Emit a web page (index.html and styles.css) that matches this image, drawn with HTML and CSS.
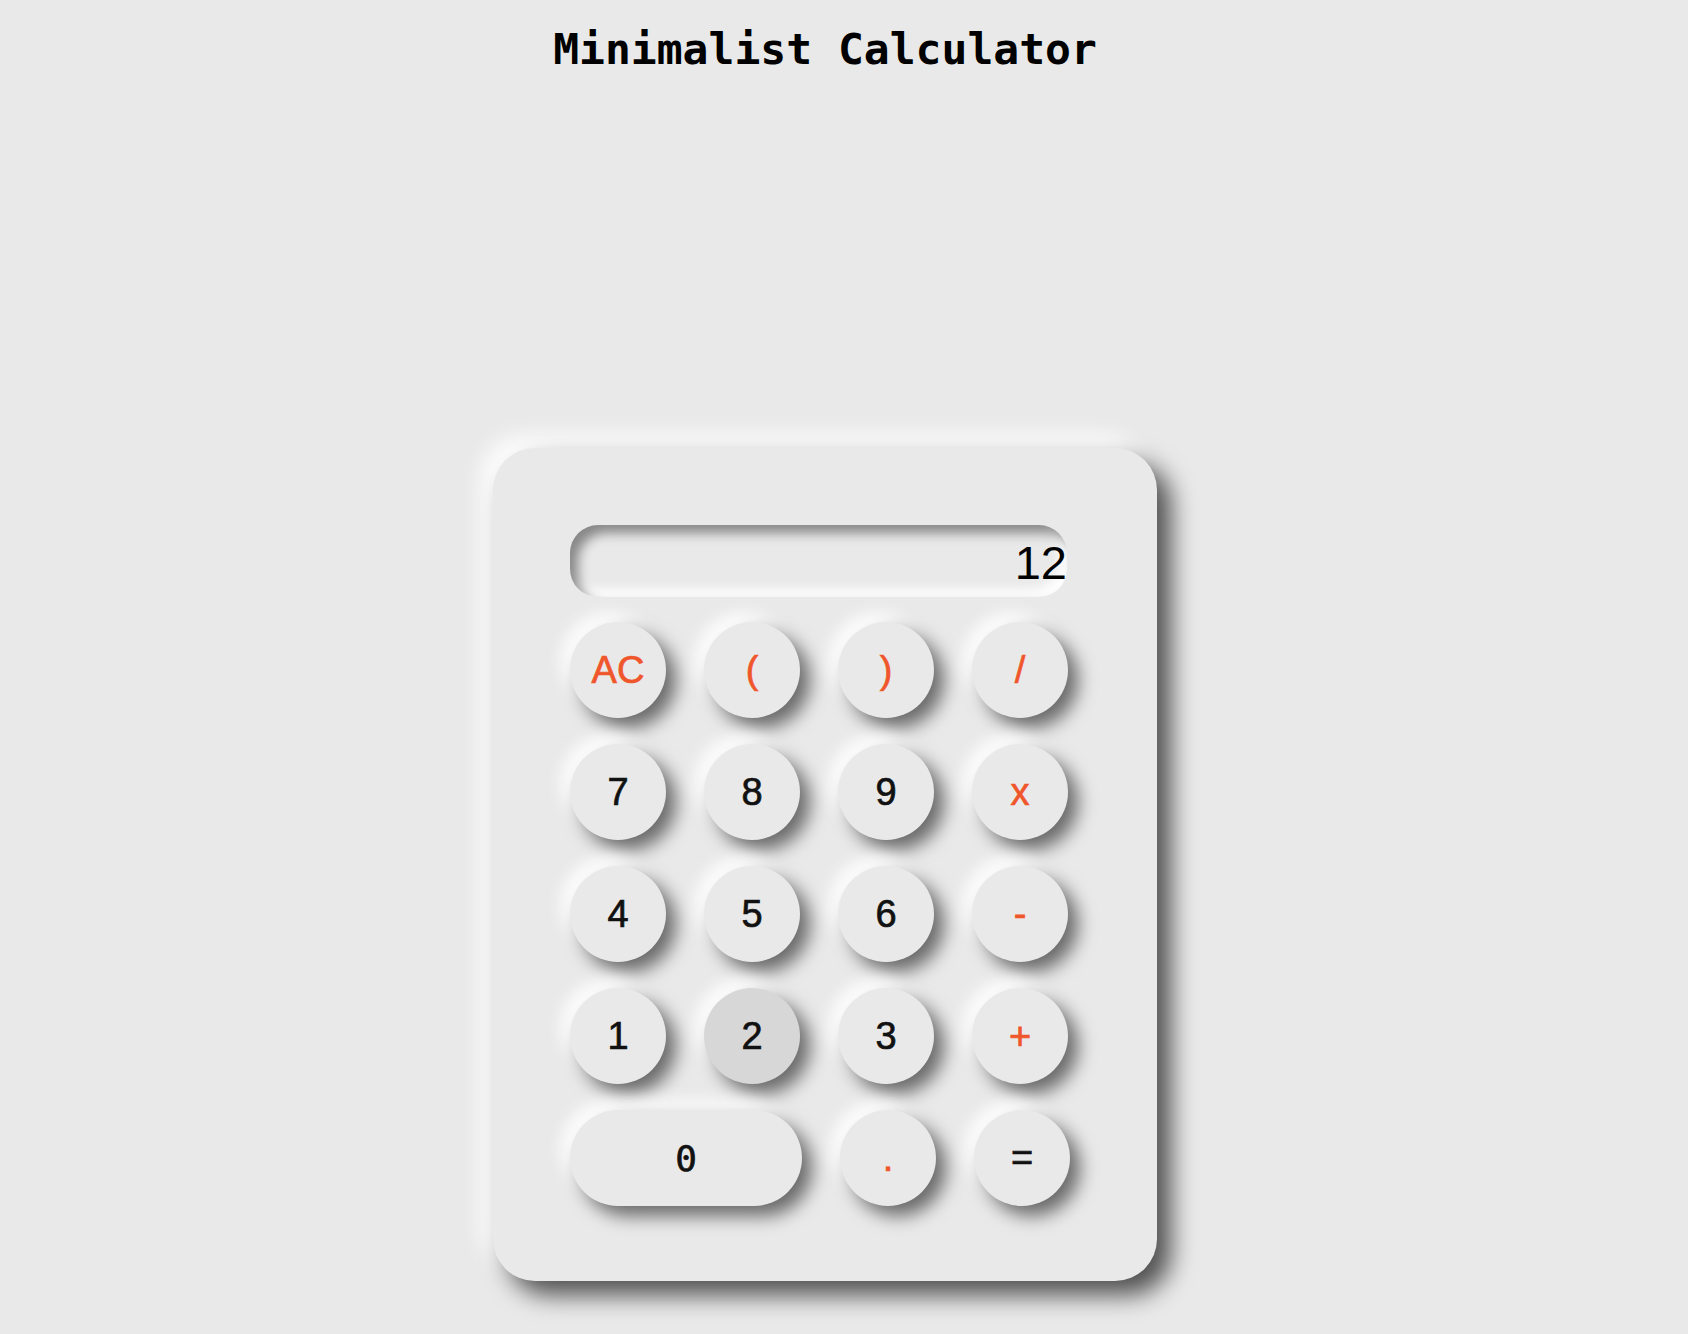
FILE: index.html
```html
<!DOCTYPE html>
<html lang="en">
<head>
<meta charset="utf-8">
<title>Minimalist Calculator</title>
<link rel="stylesheet" href="styles.css">
</head>
<body>
<div class="page">
  <h1 class="title">Minimalist Calculator</h1>
  <div class="calc">
    <div class="display">12</div>
    <div class="keys">
      <div class="row">
        <button class="key op">AC</button>
        <button class="key op">(</button>
        <button class="key op">)</button>
        <button class="key op">/</button>
      </div>
      <div class="row">
        <button class="key">7</button>
        <button class="key">8</button>
        <button class="key">9</button>
        <button class="key op">x</button>
      </div>
      <div class="row">
        <button class="key">4</button>
        <button class="key">5</button>
        <button class="key">6</button>
        <button class="key op">-</button>
      </div>
      <div class="row">
        <button class="key">1</button>
        <button class="key pressed">2</button>
        <button class="key">3</button>
        <button class="key op">+</button>
      </div>
      <div class="row">
        <button class="key wide mono">0</button>
        <button class="key op">.</button>
        <button class="key">=</button>
      </div>
    </div>
  </div>
</div>
</body>
</html>
```

FILE: styles.css
```css
html, body {
  margin: 0;
  padding: 0;
  background: #e9e9e9;
}

.page {
  display: flex;
  flex-direction: column;
  align-items: center;
  padding-right: 38px;
  padding-bottom: 50px;
}

.title {
  margin: 24px 0 0;
  font-family: "DejaVu Sans Mono", monospace;
  font-weight: 700;
  font-size: 43px;
  line-height: normal;
  color: #000;
}

.calc {
  margin-top: 374px;
  width: 664px;
  box-sizing: border-box;
  padding: 77px 86px 75px 77px;
  background: #e9e9e9;
  border-radius: 42px;
  box-shadow: 14px 14px 24px rgba(0, 0, 0, 0.66),
              -12px -12px 22px rgba(255, 255, 255, 0.95);
}

.display {
  width: 497px;
  height: 72px;
  border-radius: 28px;
  background: #e9e9e9;
  box-shadow: inset 8px 8px 12px rgba(0, 0, 0, 0.42),
              inset -8px -8px 12px rgba(255, 255, 255, 0.95);
  text-align: right;
  font-family: "Liberation Sans", Arial, sans-serif;
  font-size: 47px;
  line-height: 76px;
  color: #000;
  overflow: hidden;
  white-space: nowrap;
}

.keys {
  margin-top: 25px;
  display: flex;
  flex-direction: column;
  gap: 26px;
}

.row {
  display: flex;
  gap: 38px;
}

.key {
  width: 96px;
  height: 96px;
  border: none;
  padding: 0;
  border-radius: 48px;
  background: #e9e9e9;
  box-shadow: 10px 10px 18px rgba(0, 0, 0, 0.55),
              -9px -9px 16px rgba(255, 255, 255, 0.95);
  font-family: "Liberation Sans", Arial, sans-serif;
  font-size: 38px;
  color: #111;
  -webkit-text-stroke: 0.7px currentColor;
  display: flex;
  align-items: center;
  justify-content: center;
}

.key.op {
  color: #f0562b;
}

.key.pressed {
  background: #d7d7d7;
}

.key.wide {
  width: 232px;
}

.key.mono {
  font-family: "DejaVu Sans Mono", monospace;
  font-size: 36px;
}
```
